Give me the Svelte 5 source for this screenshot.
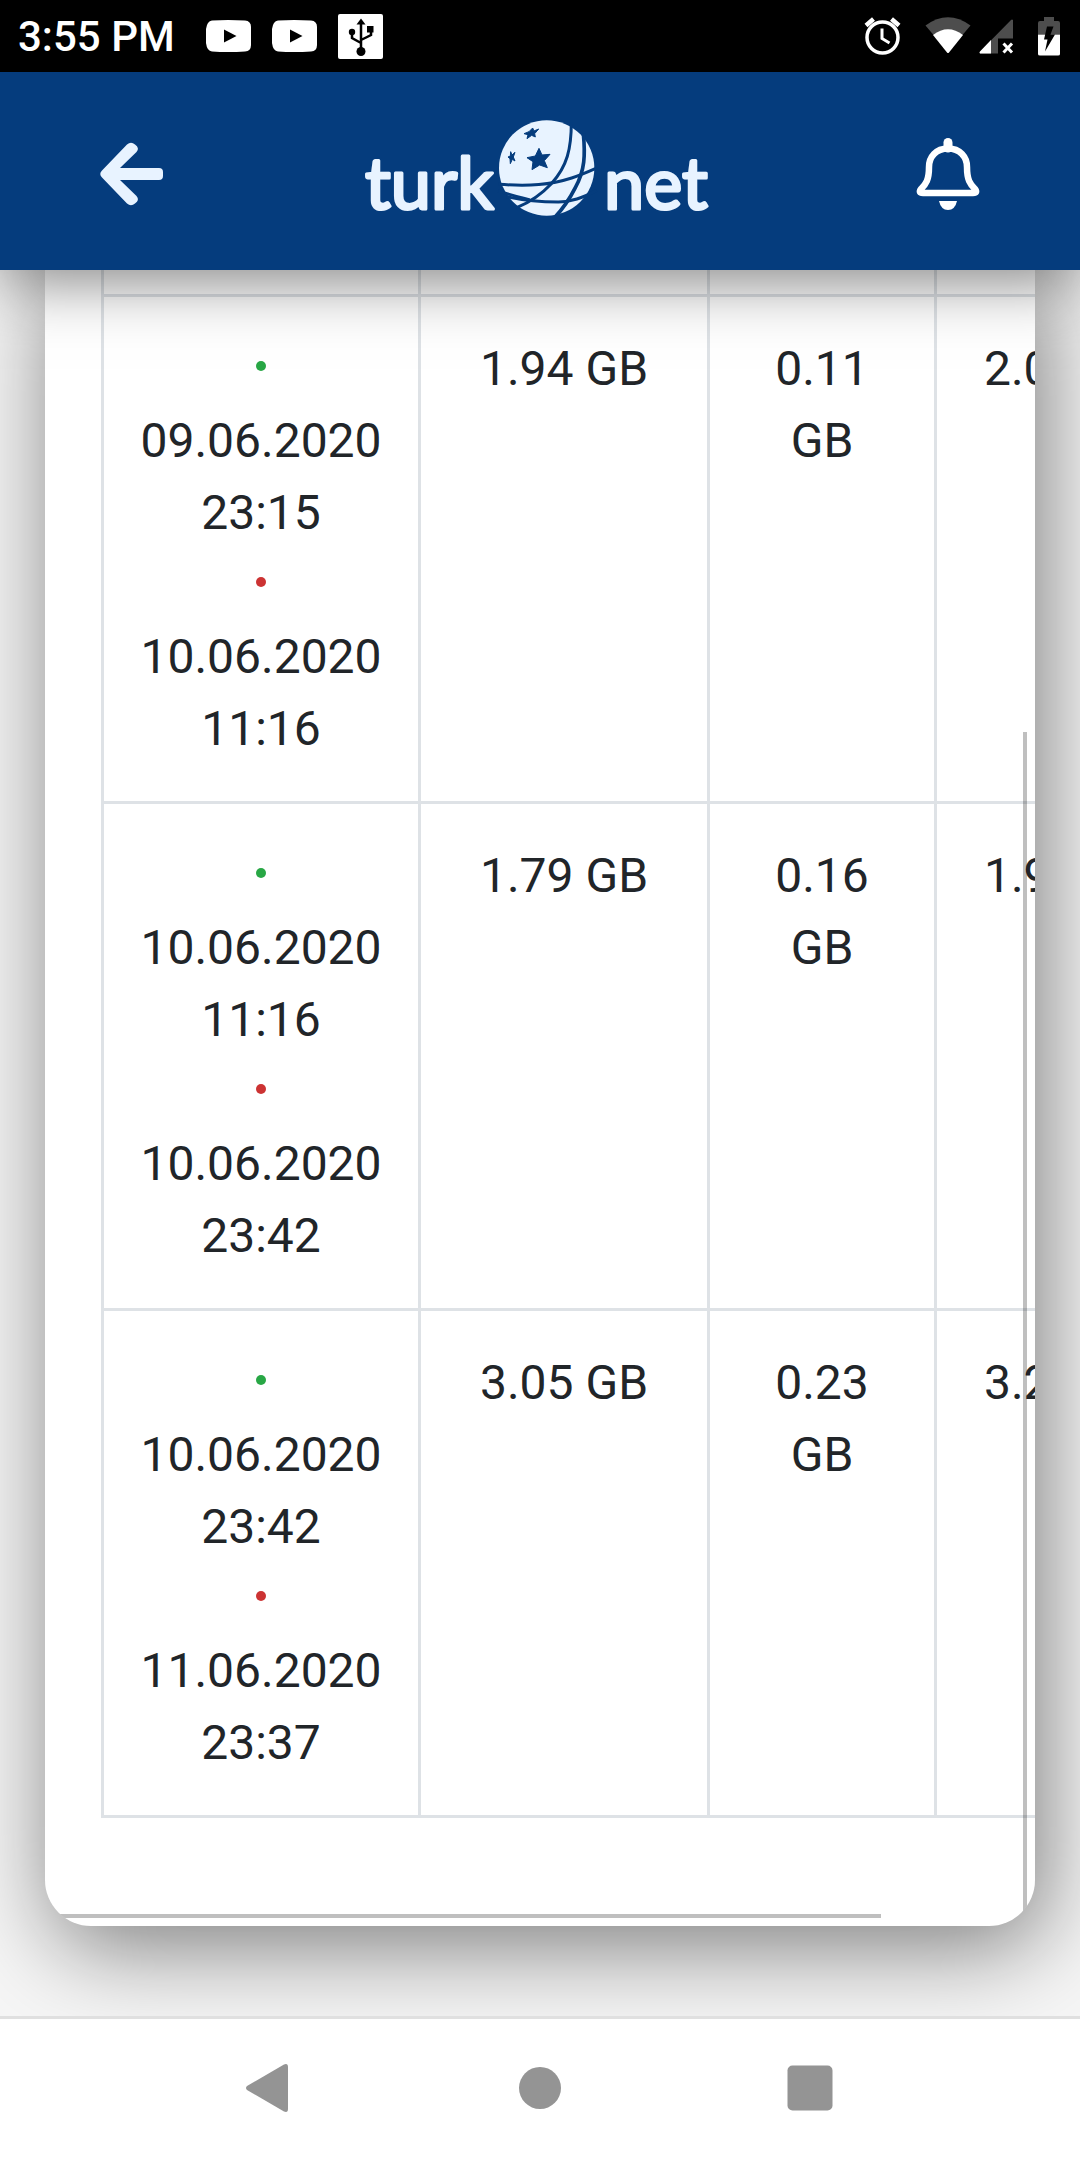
<script>
	const sessions = [
		{ start: ["09.06.2020", "23:15"], end: ["10.06.2020", "11:16"], download: "1.94 GB", upload: "0.11 GB", total: "2.05 GB" },
		{ start: ["10.06.2020", "11:16"], end: ["10.06.2020", "23:42"], download: "1.79 GB", upload: "0.16 GB", total: "1.95 GB" },
		{ start: ["10.06.2020", "23:42"], end: ["11.06.2020", "23:37"], download: "3.05 GB", upload: "0.23 GB", total: "3.28 GB" }
	];
</script>

<div class="screen">
	<div class="status">
		<div class="status-group">
			<span class="time">3:55 PM</span>
			{#each [1, 2] as n (n)}
				<svg width="45" height="32" viewBox="0 0 45 32">
					<path d="M6 0.500Q22 -0.500 39 0.500Q45 1 45 7V25Q45 31 39 31.500Q22 32.500 6 31.500Q1 31 0 23V9Q1 1 6 0.500Z" fill="#fff" />
					<path d="M18 9.500L30.500 16L18 22.500Z" fill="#000" />
				</svg>
			{/each}
			<svg width="45" height="45" viewBox="0 0 45 45">
				<rect width="45" height="45" rx="2" fill="#fff" />
				<path d="M23 9V36M23 29L14 24V19M23 26L33 21V15" fill="none" stroke="#000" stroke-width="2.500" />
				<path d="M23 4.500L27.500 10.500H18.500Z" />
				<circle cx="23" cy="37.500" r="4.500" />
				<circle cx="14" cy="18" r="3.200" />
				<rect x="29" y="12" width="6.500" height="6.500" />
			</svg>
		</div>
		<div class="status-group right">
			<svg width="37" height="40" viewBox="0 0 37 40" fill="none" stroke="#fff">
				<circle cx="18.500" cy="21.500" r="15.500" stroke-width="3.500" />
				<path d="M18 12.500V22.500L25.500 27" stroke-width="3" />
				<path d="M2 9.500L9.500 3M27.500 3L35 9.500" stroke-width="4.500" />
			</svg>
			<svg width="46" height="40" viewBox="0 0 46 40">
				<path d="M0.500 9.500Q23 -7 45.500 9.500L37.500 19H8.500Z" fill="#4d4d4d" />
				<path d="M8 19Q23 7.500 38 19L24 36.500Q23 37.500 22 36.500Z" fill="#fff" />
			</svg>
			<svg class="signal" width="35" height="40" viewBox="0 0 35 40">
				<path d="M34 4V22.500H19V37.500H1Q0 36.500 1 35.500L32 4Q33 3 34 4Z" fill="#4d4d4d" />
				<path d="M12 24V37.500H1Q0 36.500 1 35.500Z" fill="#fff" />
				<path d="M24.500 27.500L33 36.500M33 27.500L24.500 36.500" stroke="#fff" stroke-width="3" />
			</svg>
			<svg width="22" height="40" viewBox="0 0 22 40">
				<path d="M6 1H16V5H20Q22 5 22 7V18H0V7Q0 5 2 5H6Z" fill="#4d4d4d" />
				<path d="M0 18.500H22V38Q22 39.500 20 39.500H2Q0 39.500 0 38Z" fill="#fff" />
				<path d="M9 10.500H15.500L12.500 18.500H17L7 35.500L9.500 23.500H6Z" fill="#000" />
			</svg>
		</div>
	</div>

	<header class="topbar">
		<button class="icon-button" aria-label="Back">
			<svg width="64" height="72" viewBox="0 0 64 72">
				<path d="M2 32.500L27 6.500Q31 3 35 6.500Q40 10 36.500 14L20 30H59Q63 30 63 34V38Q63 42 59 42H20L36.500 58Q40 62 35 65.500Q31 69 27 65.500L2 39.500Q-1.500 36 2 32.500Z" fill="#e8f3ff" />
			</svg>
		</button>
		<a class="logo" href="/" aria-label="turk net">
			<svg width="350" height="102" viewBox="0 0 350 102">
				<text class="wordmark" x="0" y="89">turk</text>
				<text class="wordmark" x="239" y="89">net</text>
				<g transform="translate(-15 -15) scale(0.333333)">
					<circle cx="590" cy="189" r="143" fill="#e8f3ff" />
					<g fill="none" stroke="#053c7d" stroke-width="9">
						<path d="M664 52C664 130 652 184 604 236C576 266 538 292 500 308" />
						<path d="M700 85C706 150 705 195 676 248C662 276 640 310 612 340" stroke-width="11" />
						<path d="M445 238C540 244 600 240 665 219C695 209 715 200 740 189" />
						<path d="M470 275C520 286 570 291 625 291C665 290 695 280 740 256" />
						<path d="M445 258C480 270 510 277 540 285" />
					</g>
					<g fill="#053c7d" stroke="#053c7d" stroke-width="3" stroke-linejoin="round">
						<path d="M567 130L576 150L600 148L583 167L592 188L569 180L546 194L549 170L531 158L556 153Z" />
						<path d="M548 69L552 78L566 72L554 86L556 96L545 91L531 101L534 89L522 86L537 80Z" />
						<path d="M482 140L486 150L495 142L490 156L495 168L487 163L481 176L480 161L474 156L481 153Z" />
					</g>
				</g>
			</svg>
		</a>
		<button class="icon-button" aria-label="Notifications">
			<svg width="64" height="72" viewBox="0 0 64 72">
				<path d="M32 10.500C20 10.500 13 19 13 29C13 42 10 46 5 51Q2 55 7 55H57Q62 55 59 51C54 46 51 42 51 29C51 19 44 10.500 32 10.500Z" fill="none" stroke="#fff" stroke-width="6.500" />
				<path d="M32 4.500V10" stroke="#fff" stroke-width="9" stroke-linecap="round" />
				<path d="M23 63H41Q39 72 32 72Q25 72 23 63Z" fill="#fff" />
			</svg>
		</button>
	</header>

	<main>
		<section class="card">
			<table>
				<colgroup>
					<col class="col-date" />
					<col class="col-download" />
					<col class="col-upload" />
					<col class="col-total" />
				</colgroup>
				<thead>
					<tr><th></th><th></th><th></th><th></th></tr>
				</thead>
				<tbody>
					{#each sessions as session}
						<tr>
							<td>
								<span class="dot green"></span>
								<time>{session.start[0]}<br />{session.start[1]}</time>
								<span class="dot red"></span>
								<time>{session.end[0]}<br />{session.end[1]}</time>
							</td>
							<td>{session.download}</td>
							<td>{session.upload}</td>
							<td>{session.total}</td>
						</tr>
					{/each}
				</tbody>
			</table>
			<div class="thumb vertical"></div>
			<div class="thumb horizontal"></div>
		</section>
	</main>

	<nav class="navbar">
		<button aria-label="Back">
			<svg width="48" height="48" viewBox="0 0 48 48">
				<path d="M1 22L38 0.500Q42 -1 42 3V45Q42 49 38 47.500L1 26Q-1 24 1 22Z" />
			</svg>
		</button>
		<button aria-label="Home">
			<svg width="48" height="48" viewBox="0 0 48 48"><circle cx="24" cy="24" r="21" /></svg>
		</button>
		<button aria-label="Recent apps">
			<svg width="48" height="48" viewBox="0 0 48 48"><rect x="1.500" y="1.500" width="45" height="45" rx="5" /></svg>
		</button>
	</nav>
</div>

<style>
	:global(body) {
		margin: 0;
	}

	.screen {
		min-height: 100vh;
		display: flex;
		flex-direction: column;
		background: #f6f6f6;
		color: #212529;
		font-family: Roboto, sans-serif;
	}

	svg {
		display: block;
		flex: none;
		overflow: visible;
	}

	button {
		border: 0;
		padding: 0;
		background: none;
	}

	.status {
		height: 72px;
		padding: 0 20px 0 18px;
		display: flex;
		align-items: center;
		justify-content: space-between;
		background: #000;
		color: #fff;
		position: relative;
		z-index: 3;
	}

	.status-group {
		display: flex;
		align-items: center;
		gap: 21px;
	}

	.right {
		gap: 24px;
	}

	.signal {
		margin-left: -16px;
	}

	.time {
		font-size: 42px;
		font-weight: 500;
		margin-right: 10px;
	}

	.topbar {
		height: 198px;
		box-sizing: border-box;
		padding: 6px 100px 0;
		display: flex;
		align-items: center;
		justify-content: space-between;
		background: #053c7d;
		box-shadow: 0 10px 60px rgba(0, 0, 0, 0.5);
		position: relative;
		z-index: 2;
	}

	.logo {
		padding-bottom: 6px;
	}

	.wordmark {
		font-family: Lato, sans-serif;
		font-size: 72px;
		fill: #e8f3ff;
		stroke: #e8f3ff;
		stroke-width: 3px;
		stroke-linejoin: round;
	}

	main {
		flex: 1;
		padding: 0 45px 90px;
		overflow: hidden;
	}

	.card {
		padding: 0 0 108px 56px;
		border-radius: 0 0 46px 46px;
		background: #fff;
		box-shadow: 8px 20px 94px rgba(0, 0, 0, 0.5);
		overflow: hidden;
		position: relative;
	}

	table {
		width: 1101px;
		table-layout: fixed;
		border-collapse: separate;
		border-spacing: 0;
		border-left: 3px solid #dee2e6;
		font-size: 48px;
		font-kerning: none;
		line-height: 72px;
		text-align: center;
	}

	.col-date {
		width: 317px;
	}

	.col-download {
		width: 289px;
	}

	.col-upload {
		width: 227px;
	}

	.col-total {
		width: 265px;
	}

	th, td {
		border-right: 3px solid #dee2e6;
		border-bottom: 3px solid #dee2e6;
	}

	th {
		height: 24px;
		padding: 0;
	}

	td {
		padding: 36px;
		vertical-align: top;
	}

	time {
		display: block;
	}

	.dot {
		height: 72px;
		box-sizing: border-box;
		padding-bottom: 6px;
		display: flex;
		align-items: center;
		justify-content: center;
	}

	.dot:before {
		content: '';
		width: 10px;
		height: 10px;
		border-radius: 50%;
		background: currentColor;
	}

	.green {
		color: #28a745;
	}

	.red {
		color: #cc3333;
	}

	/* Overlay scrollbars */
	.thumb {
		position: absolute;
		background: rgba(0, 0, 0, 0.25);
	}

	.vertical {
		top: 27.9%;
		right: 8px;
		bottom: 8px;
		width: 4px;
	}

	.horizontal {
		left: 8px;
		right: 154px;
		bottom: 8px;
		height: 4px;
	}

	.navbar {
		height: 144px;
		box-sizing: border-box;
		padding: 0 12.5% 4px;
		border-top: 3px solid #e0e0e0;
		display: flex;
		background: #fff;
		position: relative;
		z-index: 1;
	}

	.navbar button {
		flex: 1;
		display: flex;
		align-items: center;
		justify-content: center;
	}

	.navbar svg {
		fill: #949494;
	}
</style>
